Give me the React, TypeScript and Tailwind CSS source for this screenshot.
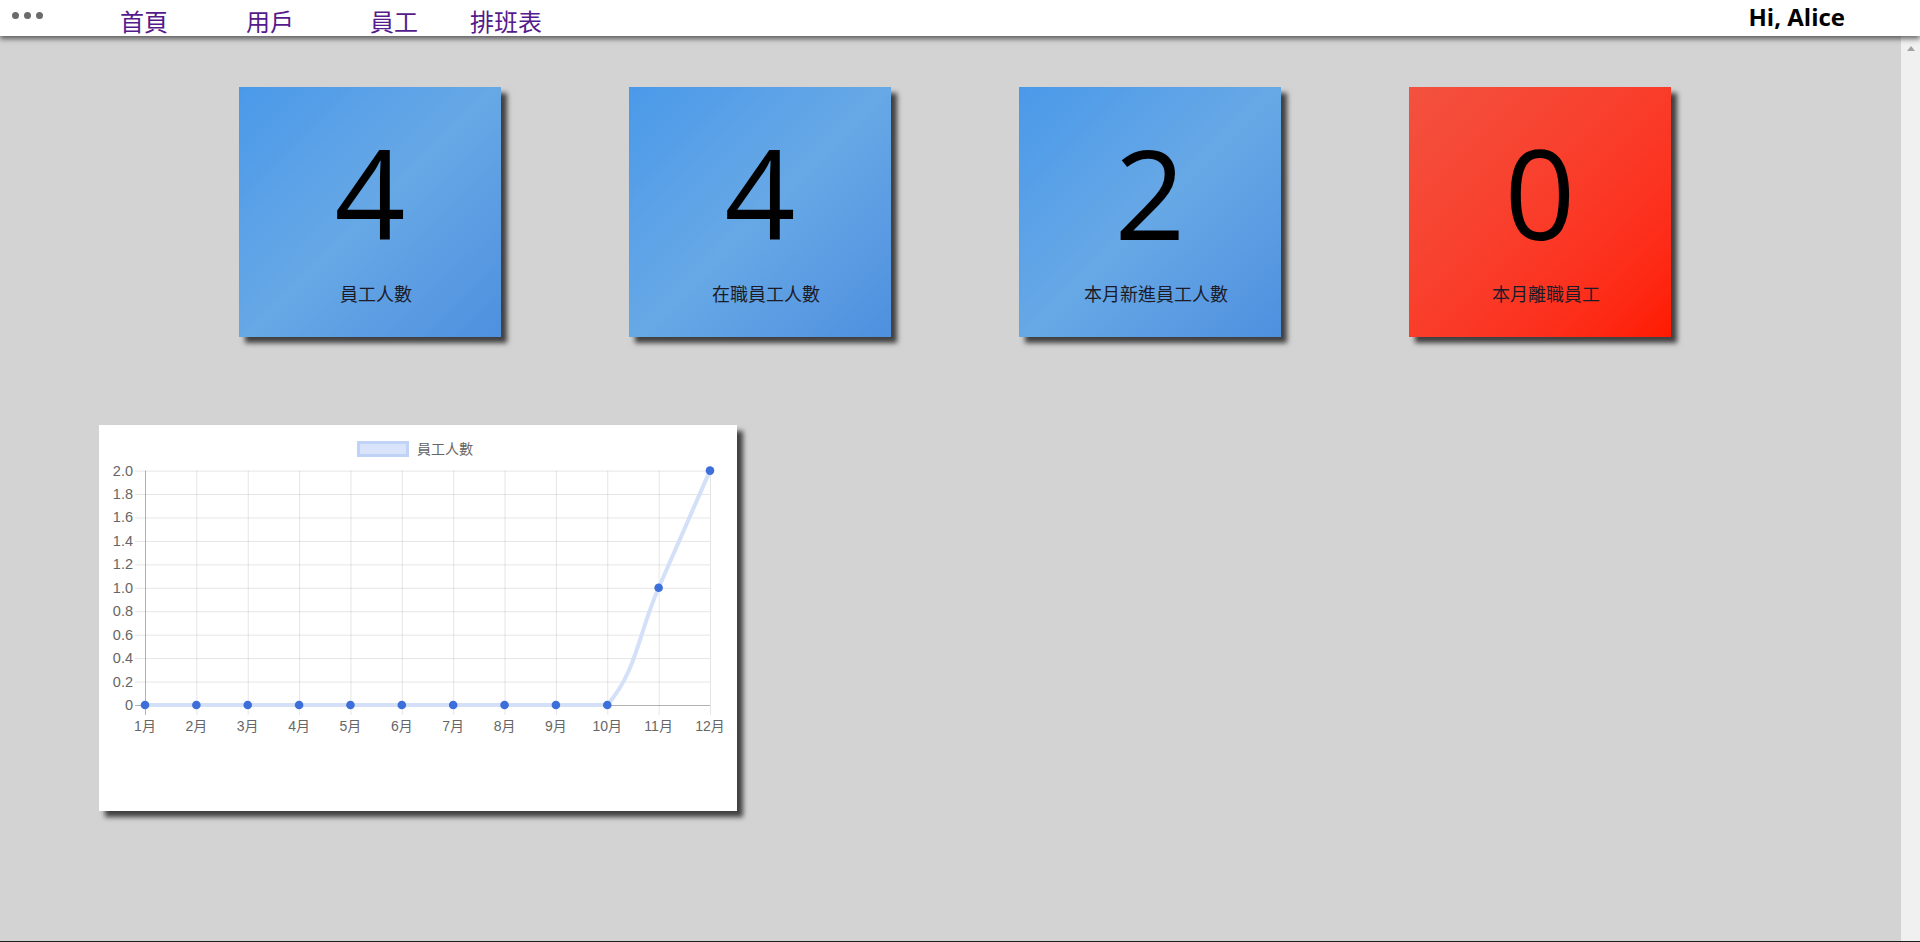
import React from "react";

const cjk = "font-['Noto_Sans_CJK_TC','Noto_Sans',sans-serif]";

const stats: ReadonlyArray<{ value: number; label: string; red?: boolean }> = [
  { value: 4, label: "員工人數" },
  { value: 4, label: "在職員工人數" },
  { value: 2, label: "本月新進員工人數" },
  { value: 0, label: "本月離職員工", red: true },
];

const months = ["1月", "2月", "3月", "4月", "5月", "6月", "7月", "8月", "9月", "10月", "11月", "12月"];
const data = [0, 0, 0, 0, 0, 0, 0, 0, 0, 0, 1, 2];

// chart area inside the white card
const left = 46;
const right = 611;
const top = 45.6;
const bottom = 280;
const step = (right - left) / 11;
const px = (i: number) => left + i * step;
const py = (v: number) => bottom - (v / 2) * (bottom - top);

// same spline idea as chart.js (tension 0.4, capped to the chart area)
function linePath() {
  const pts = data.map((v, i) => ({ x: px(i), y: py(v) }));
  const clampY = (y: number) => Math.min(bottom, Math.max(top, y));
  const cps = pts.map((p, i) => {
    const p0 = pts[i - 1] ?? p;
    const p2 = pts[i + 1] ?? p;
    const d01 = Math.hypot(p.x - p0.x, p.y - p0.y);
    const d12 = Math.hypot(p2.x - p.x, p2.y - p.y);
    const sum = d01 + d12 || 1;
    const fa = (0.4 * d01) / sum;
    const fb = (0.4 * d12) / sum;
    return {
      prev: { x: p.x - fa * (p2.x - p0.x), y: clampY(p.y - fa * (p2.y - p0.y)) },
      next: { x: p.x + fb * (p2.x - p0.x), y: clampY(p.y + fb * (p2.y - p0.y)) },
    };
  });
  let d = `M ${pts[0].x} ${pts[0].y}`;
  for (let i = 1; i < pts.length; i++) {
    const a = cps[i - 1].next;
    const b = cps[i].prev;
    d += ` C ${a.x} ${a.y} ${b.x} ${b.y} ${pts[i].x} ${pts[i].y}`;
  }
  return d;
}

function StatCard({ value, label, red }: { value: number; label: string; red?: boolean }) {
  return (
    <div
      className={`w-[262px] h-[250px] flex flex-col items-center shadow-[6px_6px_5px_rgba(0,0,0,0.7)] ${
        red
          ? "bg-linear-135 from-[#f3513f] to-[#ff1a00]"
          : "bg-linear-135 from-[#4a99e9] via-[#67a8e6] to-[#4f90df]"
      }`}
    >
      <span className="mt-[42px] text-[124px] leading-[126px] text-black font-['Open_Sans',sans-serif]">
        {value}
      </span>
      <span className={`mt-[27px] pl-[12px] text-[18px] leading-[22px] text-[#1c1c28] ${cjk}`}>{label}</span>
    </div>
  );
}

function EmployeeChart() {
  const ticks = [0, 0.2, 0.4, 0.6, 0.8, 1, 1.2, 1.4, 1.6, 1.8, 2];
  return (
    <div className="w-[638px] h-[386px] bg-white shadow-[6px_6px_5px_rgba(0,0,0,0.7)]">
      <svg width="638" height="386" className="font-['Liberation_Sans','Noto_Sans_CJK_TC',sans-serif]">
        <rect x="259.5" y="17.5" width="49" height="13" fill="#d9e4fb" stroke="#c0d2f5" strokeWidth="3" />
        <text x="318" y="28.5" fontSize="14" fill="#666">員工人數</text>

        {ticks.map((t) => (
          <g key={t}>
            <line
              x1={36}
              x2={right}
              y1={py(t) + 0.5}
              y2={py(t) + 0.5}
              stroke={t === 0 ? "rgba(0,0,0,0.3)" : "rgba(0,0,0,0.1)"}
            />
            <text x={34} y={py(t) + 5} fontSize="14.5" fill="#666" textAnchor="end">
              {t === 0 ? "0" : t.toFixed(1)}
            </text>
          </g>
        ))}

        {months.map((m, i) => (
          <g key={m}>
            <line
              x1={px(i) + 0.5}
              x2={px(i) + 0.5}
              y1={top}
              y2={bottom + 10}
              stroke={i === 0 ? "rgba(0,0,0,0.3)" : "rgba(0,0,0,0.1)"}
            />
            <text x={px(i)} y={306} fontSize="14" fill="#666" textAnchor="middle">
              {m}
            </text>
          </g>
        ))}

        <path d={linePath()} fill="none" stroke="#d3e0f8" strokeWidth="4" />
        {data.map((v, i) => (
          <circle key={i} cx={px(i)} cy={py(v)} r="4.3" fill="#3d6fda" />
        ))}
      </svg>
    </div>
  );
}

export default function App() {
  return (
    <div className="w-[1920px] h-[942px] flex flex-col bg-[#d3d3d3] overflow-hidden">
      <header className="relative z-10 h-9 shrink-0 bg-white shadow-[0_3px_5px_rgba(0,0,0,0.55)] flex">
        <div className="flex gap-[5px] ml-[12px] mt-[12px]">
          <span className="w-[7px] h-[7px] rounded-full bg-[#6b6b6b]" />
          <span className="w-[7px] h-[7px] rounded-full bg-[#6b6b6b]" />
          <span className="w-[7px] h-[7px] rounded-full bg-[#6b6b6b]" />
        </div>
        <nav className={`flex items-start pt-[6px] text-[24px] leading-[30px] text-[#551a8b] ${cjk}`}>
          <a href="#" className="ml-[77px]">首頁</a>
          <a href="#" className="ml-[78px]">用戶</a>
          <a href="#" className="ml-[76px]">員工</a>
          <a href="#" className="ml-[52px]">排班表</a>
        </nav>
        <span className="ml-auto mr-[75px] mt-[1px] text-[24px] leading-[32px] font-bold text-black font-['Open_Sans',sans-serif]">
          Hi, Alice
        </span>
      </header>

      <div className="flex flex-1 min-h-0">
        <main className="flex-1 flex flex-col">
          <div className="flex gap-[128px] pl-[239px] pt-[51px]">
            {stats.map((s) => (
              <StatCard key={s.label} {...s} />
            ))}
          </div>
          <div className="pl-[99px] pt-[88px]">
            <EmployeeChart />
          </div>
        </main>
        <div className="w-[19px] bg-[#f0f0f0] flex justify-center pt-[10px]">
          <span className="w-0 h-0 border-x-[4.5px] border-x-transparent border-b-[5px] border-b-[#a3a3a3]" />
        </div>
      </div>
      <div className="h-px shrink-0 bg-[#1e1e1e]" />
    </div>
  );
}
